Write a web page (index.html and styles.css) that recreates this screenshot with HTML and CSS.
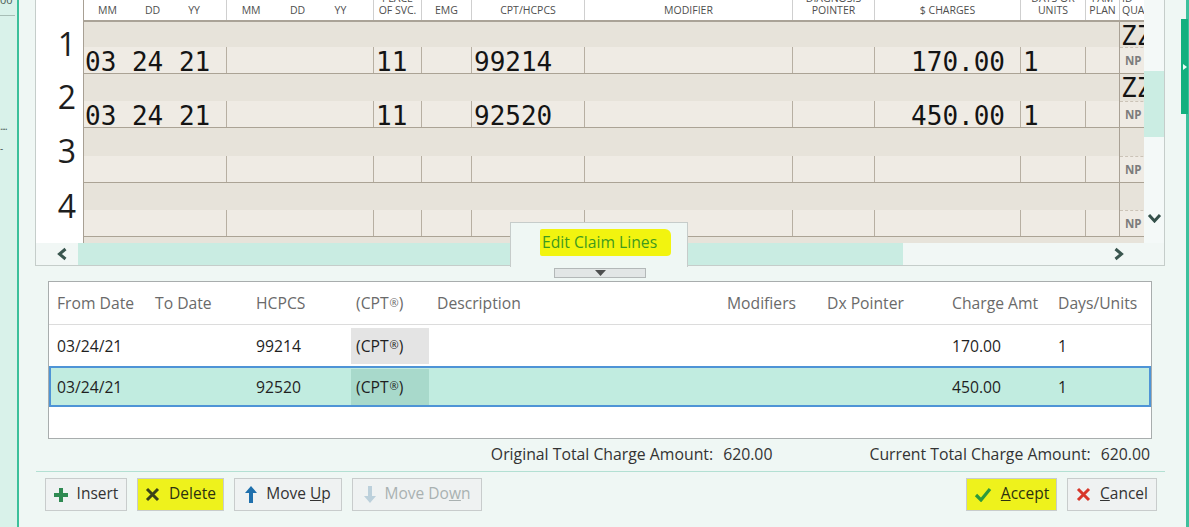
FILE: index.html
```html
<!DOCTYPE html>
<html>
<head>
<meta charset="utf-8">
<title>Edit Claim Lines</title>
<link rel="stylesheet" href="styles.css">
</head>
<body>
<div class="app">
  <aside class="side-left">
    <div class="sl-top">00</div>
    <div class="sl-dots">....</div>
    <div class="sl-dash">-</div>
  </aside>

  <main class="main">
    <section class="form-panel">
      <div class="form-body">
        <div class="row-nums">
          <div class="num-head"></div>
          <div class="num r1">1</div>
          <div class="num r2">2</div>
          <div class="num r3">3</div>
          <div class="num r4">4</div>
        </div>

        <div class="grid">
          <div class="g-head">
            <div class="h tri first"><span>MM</span><span>DD</span><span>YY</span></div>
            <div class="h tri"><span>MM</span><span>DD</span><span>YY</span></div>
            <div class="h"><div>PLACE<br>OF SVC.</div></div>
            <div class="h"><div>EMG</div></div>
            <div class="h"><div>CPT/HCPCS</div></div>
            <div class="h"><div>MODIFIER</div></div>
            <div class="h"><div>DIAGNOSIS<br>POINTER</div></div>
            <div class="h"><div>$ CHARGES</div></div>
            <div class="h"><div>DAYS OR<br>UNITS</div></div>
            <div class="h"><div>FAM<br>PLAN</div></div>
            <div class="h q"><div>ID<br>QUAL.</div></div>
          </div>

          <div class="g-row r1">
            <div class="top"></div>
            <div class="c first">03 24 21</div>
            <div class="c"></div>
            <div class="c">11</div>
            <div class="c"></div>
            <div class="c">99214</div>
            <div class="c"></div>
            <div class="c"></div>
            <div class="c amt">170.00</div>
            <div class="c">1</div>
            <div class="c"></div>
            <div class="q"><div class="zz">ZZ</div><div class="np">NP</div></div>
          </div>

          <div class="g-row r2">
            <div class="top"></div>
            <div class="c first">03 24 21</div>
            <div class="c"></div>
            <div class="c">11</div>
            <div class="c"></div>
            <div class="c">92520</div>
            <div class="c"></div>
            <div class="c"></div>
            <div class="c amt">450.00</div>
            <div class="c">1</div>
            <div class="c"></div>
            <div class="q"><div class="zz">ZZ</div><div class="np">NP</div></div>
          </div>

          <div class="g-row r3">
            <div class="top"></div>
            <div class="c first"></div>
            <div class="c"></div>
            <div class="c"></div>
            <div class="c"></div>
            <div class="c"></div>
            <div class="c"></div>
            <div class="c"></div>
            <div class="c amt"></div>
            <div class="c"></div>
            <div class="c"></div>
            <div class="q"><div class="zz"></div><div class="np">NP</div></div>
          </div>

          <div class="g-row r4">
            <div class="top"></div>
            <div class="c first"></div>
            <div class="c"></div>
            <div class="c"></div>
            <div class="c"></div>
            <div class="c"></div>
            <div class="c"></div>
            <div class="c"></div>
            <div class="c amt"></div>
            <div class="c"></div>
            <div class="c"></div>
            <div class="q"><div class="zz"></div><div class="np">NP</div></div>
          </div>
        </div>

        <div class="vscroll">
          <div class="vthumb"></div>
          <div class="vspacer"></div>
          <div class="vdown">
            <svg width="15" height="10" viewBox="0 0 15 10"><path d="M2 2 L7.5 8 L13 2" fill="none" stroke="#34504a" stroke-width="3"/></svg>
          </div>
        </div>
      </div>

      <div class="hscroll">
        <div class="hbtn-l">
          <svg width="12" height="14" viewBox="0 0 12 14"><path d="M9.5 2 L3.5 7 L9.5 12" fill="none" stroke="#3a564f" stroke-width="3"/></svg>
        </div>
        <div class="htrack"><div class="hthumb"></div></div>
        <div class="hbtn-r">
          <svg width="12" height="14" viewBox="0 0 12 14"><path d="M2.5 2 L8.5 7 L2.5 12" fill="none" stroke="#3a564f" stroke-width="3"/></svg>
        </div>
        <div class="hcorner"></div>
      </div>

      <div class="tab"><span class="hl">Edit Claim Lines</span></div>
    </section>

    <div class="handle">
      <svg width="11" height="6" viewBox="0 0 11 6"><path d="M0 0 H11 L5.5 6 Z" fill="#4d4f4f"/></svg>
    </div>

    <div class="lines">
      <div class="l-head">
        <div class="lc">From Date</div>
        <div class="lc">To Date</div>
        <div class="lc">HCPCS</div>
        <div class="lc cpt-h">(CPT<span class="reg">®</span>)</div>
        <div class="lc">Description</div>
        <div class="lc">Modifiers</div>
        <div class="lc">Dx Pointer</div>
        <div class="lc">Charge Amt</div>
        <div class="lc">Days/Units</div>
      </div>
      <div class="l-row">
        <div class="lc">03/24/21</div>
        <div class="lc"></div>
        <div class="lc">99214</div>
        <div class="lc cpt">(CPT<span class="reg">®</span>)</div>
        <div class="lc"></div>
        <div class="lc"></div>
        <div class="lc"></div>
        <div class="lc">170.00</div>
        <div class="lc">1</div>
      </div>
      <div class="l-row selected">
        <div class="lc">03/24/21</div>
        <div class="lc"></div>
        <div class="lc">92520</div>
        <div class="lc cpt">(CPT<span class="reg">®</span>)</div>
        <div class="lc"></div>
        <div class="lc"></div>
        <div class="lc"></div>
        <div class="lc">450.00</div>
        <div class="lc">1</div>
      </div>
    </div>

    <div class="totals">
      <div class="total"><span>Original Total Charge Amount:</span><span>620.00</span></div>
      <div class="total"><span>Current Total Charge Amount:</span><span>620.00</span></div>
    </div>

    <div class="sep"></div>

    <div class="actions">
      <button class="btn w-insert">
        <svg width="14" height="14" viewBox="0 0 14 14"><path d="M5 0h4v5h5v4H9v5H5V9H0V5h5z" fill="#2f8a52"/></svg>
        <span>Insert</span>
      </button>
      <button class="btn w-delete marked">
        <svg width="15" height="15" viewBox="0 0 15 15"><path d="M2 2 L13 13 M13 2 L2 13" stroke="#3a4219" stroke-width="3"/></svg>
        <span>Delete</span>
      </button>
      <button class="btn w-up">
        <svg width="12" height="17" viewBox="0 0 12 17"><path d="M6 0 L12 7 L8 7 L8 17 L4 17 L4 7 L0 7 Z" fill="#1f70ad"/></svg>
        <span>Move <span class="u">U</span>p</span>
      </button>
      <button class="btn w-down disabled">
        <svg width="12" height="17" viewBox="0 0 12 17"><path d="M4 0 L8 0 L8 10 L12 10 L6 17 L0 10 L4 10 Z" fill="#bcd0db"/></svg>
        <span>Move Do<span class="u">w</span>n</span>
      </button>
      <div class="spacer"></div>
      <button class="btn w-accept marked">
        <svg width="18" height="15" viewBox="0 0 18 15"><path d="M2 8 L7 13 L16 2" fill="none" stroke="#2c9a3c" stroke-width="3.2"/></svg>
        <span><span class="u">A</span>ccept</span>
      </button>
      <button class="btn w-cancel">
        <svg width="15" height="15" viewBox="0 0 15 15"><path d="M2 2 L13 13 M13 2 L2 13" stroke="#d8372b" stroke-width="3"/></svg>
        <span><span class="u">C</span>ancel</span>
      </button>
    </div>
  </main>

  <aside class="side-right">
    <div class="flag">
      <svg width="4" height="6" viewBox="0 0 4 6"><path d="M0 0 L4 3 L0 6 Z" fill="#e8fff6"/></svg>
    </div>
  </aside>
</div>
</body>
</html>
```

FILE: styles.css
```css
* { box-sizing: border-box; }

html, body {
  margin: 0;
  padding: 0;
}

body {
  width: 1189px;
  height: 527px;
  overflow: hidden;
  background: #eff7f4;
  font-family: "Open Sans", "Noto Sans", sans-serif;
  color: #222;
}

.app {
  display: flex;
  height: 527px;
}

/* ---------- left strip ---------- */
.side-left {
  width: 19px;
  flex: none;
  background: #d9f2ea;
  border-right: 2px solid #3cc09b;
  font-size: 11px;
  color: #4a5a55;
  overflow: hidden;
}

.sl-top {
  height: 16px;
  margin-right: 2px;
  border-bottom: 1px solid #a7beb6;
  overflow: hidden;
  display: flex;
  align-items: flex-end;
  padding-bottom: 10px;
  line-height: 11px;
}

.sl-dots {
  margin-top: 104px;
  font-size: 10px;
  line-height: 12px;
  letter-spacing: -1px;
}

.sl-dash {
  margin-top: 10px;
  font-size: 10px;
  line-height: 12px;
}

/* ---------- right strip ---------- */
.side-right {
  width: 8px;
  flex: none;
  border-right: 3px solid #3dc19d;
  position: relative;
}

.flag {
  position: absolute;
  left: 0;
  top: 19px;
  width: 7px;
  height: 95px;
  background: #13b07f;
  display: flex;
  align-items: center;
  justify-content: flex-end;
  padding-right: 1px;
}

/* ---------- main column ---------- */
.main {
  flex: 1;
  min-width: 0;
  display: flex;
  flex-direction: column;
}

.form-panel {
  position: relative;
  margin: 0 16px;
  border: 1px solid #c5cdca;
  border-top: none;
  background: #fff;
}

.form-body {
  display: flex;
  height: 243px;
  overflow: hidden;
}

.row-nums {
  width: 47px;
  flex: none;
  background: #fff;
}

.num-head { height: 22px; }

.num {
  display: flex;
  align-items: center;
  justify-content: flex-end;
  padding-right: 7px;
  padding-bottom: 9px;
  font-size: 32px;
  line-height: 1;
  color: #1e1e1e;
}

.num.r1, .g-row.r1 { height: 52px; }
.num.r2, .g-row.r2 { height: 54px; }
.num.r3, .g-row.r3 { height: 55px; }
.num.r4, .g-row.r4 { height: 54px; }

.grid {
  --cols: 142px 147px 48px 50px 113px 208px 82px 146px 65px 34px 60px;
  flex: 1;
  min-width: 0;
  overflow: hidden;
  border-left: 1px solid #a8a094;
  background: #e7e3da;
}

.g-head {
  display: grid;
  grid-template-columns: var(--cols);
  height: 22px;
  background: #fff;
  border-bottom: 2px solid #aaa397;
}

.h {
  border-left: 1px solid #cfcfcf;
  display: flex;
  flex-direction: column;
  justify-content: flex-end;
  align-items: center;
  text-align: center;
  padding-bottom: 4px;
  font-size: 10.5px;
  line-height: 12px;
  color: #4e4e4e;
  overflow: hidden;
  white-space: nowrap;
}

.h.first { border-left: none; }

.h.tri {
  flex-direction: row;
  justify-content: space-around;
  align-items: flex-end;
  padding-right: 12px;
}

.h.q {
  align-items: flex-start;
  text-align: left;
  padding-left: 2px;
}

.g-row {
  display: grid;
  grid-template-columns: var(--cols);
  grid-template-rows: 1fr 26px;
  border-bottom: 1px solid #aba395;
}

.g-row .top {
  grid-column: 1 / 11;
  grid-row: 1;
  background: #e7e3da;
}

.g-row .c {
  grid-row: 2;
  background: #efebe4;
  border-left: 1px solid #b7afa2;
  padding-left: 2px;
  font-family: "DejaVu Sans Mono", "Liberation Mono", monospace;
  font-size: 26px;
  line-height: 30px;
  color: #141414;
  white-space: nowrap;
}

.g-row .c.first {
  border-left: none;
  padding-left: 1px;
}

.g-row .c.amt {
  text-align: right;
  padding-right: 15px;
}

.g-row .q {
  grid-column: 11;
  grid-row: 1 / 3;
  border-left: 1px solid #a9a195;
  display: grid;
  grid-template-rows: 1fr 26px;
}

.q .zz {
  background: #e7e3da;
  font-family: "DejaVu Sans Mono", "Liberation Mono", monospace;
  font-size: 26px;
  line-height: 22px;
  padding-top: 3px;
  padding-left: 1px;
  color: #141414;
  overflow: hidden;
  white-space: nowrap;
}

.q .np {
  background: #efebe4;
  border-top: 1px dashed #cbc3b7;
  font-size: 11.5px;
  font-weight: 700;
  line-height: 25px;
  color: #7c7c7c;
  padding-left: 5px;
}

/* vertical scrollbar */
.vscroll {
  width: 20px;
  flex: none;
  background: #f4f9f8;
  display: flex;
  flex-direction: column;
  padding-top: 71px;
}

.vthumb {
  height: 66px;
  background: #cbede3;
}

.vspacer { flex: 1; }

.vdown {
  height: 20px;
  margin-bottom: 15px;
  display: flex;
  align-items: center;
  justify-content: center;
}

/* horizontal scrollbar */
.hscroll {
  display: flex;
  height: 22px;
  background: #f1f7f5;
}

.hbtn-l {
  width: 42px;
  flex: none;
  display: flex;
  align-items: center;
  justify-content: center;
  padding-left: 10px;
}

.htrack {
  flex: 1;
  min-width: 0;
}

.hthumb {
  width: 825px;
  height: 100%;
  background: #c9ece2;
}

.hbtn-r {
  width: 24px;
  flex: none;
  display: flex;
  align-items: center;
  justify-content: center;
}

.hcorner {
  width: 33px;
  flex: none;
}

/* tab over the panel */
.tab {
  position: absolute;
  left: 474px;
  top: 222px;
  width: 178px;
  height: 45px;
  background: #eff7f4;
  border: 1px solid #c6ccca;
  border-bottom: none;
  padding: 6px 0 0 29px;
}

.hl {
  display: inline-block;
  background: #f2f40f;
  padding: 4px 14px 4px 2px;
  color: #3f9a1e;
  font-size: 15.7px;
  line-height: 19px;
  border-radius: 2px 6px 4px 2px;
}

.handle {
  width: 92px;
  height: 10px;
  margin: 2px auto 3px;
  background: #e2e6e6;
  border: 1px solid #b3b8b8;
  display: flex;
  align-items: center;
  justify-content: center;
}

/* ---------- claim lines list ---------- */
.lines {
  --lcols: 98px 101px 103px 78px 290px 100px 125px 106px 101px;
  margin: 0 29px;
  height: 158px;
  border: 1px solid #a8adad;
  background: #fff;
  font-size: 15.7px;
}

.l-head {
  display: grid;
  grid-template-columns: var(--lcols);
  height: 43px;
  align-items: center;
  border-bottom: 1px solid #dcdcdc;
  color: #6a6a6a;
}

.lc {
  padding-left: 8px;
  white-space: nowrap;
}

.cpt-h { padding-left: 5px; }

.reg {
  font-size: 11px;
  position: relative;
  top: -2px;
  margin-left: 1px;
}

.l-row {
  display: grid;
  grid-template-columns: var(--lcols);
  height: 41px;
  align-items: center;
  color: #1f1f1f;
}

.l-row .cpt {
  align-self: stretch;
  margin: 3px 0 2px;
  padding-left: 5px;
  display: flex;
  align-items: center;
  background: #e4e4e4;
}

.l-row.selected {
  background: #c1ece0;
  outline: 2px solid #4e94d6;
  outline-offset: -2px;
}

.l-row.selected .cpt {
  background: #a8d9cb;
}

/* totals */
.totals {
  display: flex;
  justify-content: flex-end;
  align-items: center;
  gap: 97px;
  height: 32px;
  padding-bottom: 3px;
  margin-right: 31px;
  font-size: 15.8px;
  color: #333;
}

.total {
  display: flex;
  gap: 10px;
}

.sep {
  margin: 0 16px 0 17px;
  border-top: 1px solid #b3e0d3;
}

/* ---------- buttons ---------- */
.actions {
  display: flex;
  align-items: center;
  gap: 10px;
  margin-top: 6px;
  padding: 0 24px 0 26px;
}

.spacer { flex: 1; }

.btn {
  height: 33px;
  display: flex;
  align-items: center;
  justify-content: center;
  gap: 9px;
  padding: 0 0 3px;
  background: #eff2f2;
  border: 1px solid #c8cccc;
  border-radius: 0;
  font-family: "Open Sans", "Noto Sans", sans-serif;
  font-size: 15.5px;
  color: #333;
}

.btn svg { margin-top: 3px; }

.btn.marked {
  background: #eef21c;
  color: #2c3110;
}

.btn.disabled {
  color: #a9b1b1;
}

.u { text-decoration: underline; }

.w-insert { width: 82px; }
.w-delete { width: 87px; }
.w-up { width: 108px; }
.w-down { width: 130px; }
.w-accept { width: 91px; }
.w-cancel { width: 90px; }
```
